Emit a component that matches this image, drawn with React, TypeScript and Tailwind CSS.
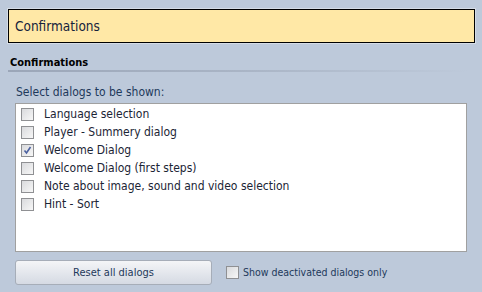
import { useState } from "react";

const font = { fontFamily: '"DejaVu Sans Condensed", "Liberation Sans", sans-serif' };

const dialogs = [
  { label: "Language selection", checked: false },
  { label: "Player - Summery dialog", checked: false },
  { label: "Welcome Dialog", checked: true },
  { label: "Welcome Dialog (first steps)", checked: false },
  { label: "Note about image, sound and video selection", checked: false },
  { label: "Hint - Sort", checked: false },
];

function Check({ checked }: { checked: boolean }) {
  return (
    <span className="relative flex h-[13px] w-[13px] shrink-0 items-center justify-center border border-[#8f9093] bg-gradient-to-br from-[#d9dadd] to-[#f7f7f7]">
      {checked && (
        <svg width="9" height="9" viewBox="0 0 9 9" className="absolute">
          <path d="M1.5 4.5 L3.5 7 L7.5 1" fill="none" stroke="#4c61a0" strokeWidth="1.6" />
        </svg>
      )}
    </span>
  );
}

export default function App() {
  const [items, setItems] = useState(dialogs);
  const [onlyDeactivated, setOnlyDeactivated] = useState(false);

  return (
    <div
      className="flex h-[292px] w-[482px] flex-col bg-[#bdc9da] px-[8px] pt-[9px] text-[11px] leading-[13px] text-[#1e395b]"
      style={font}
    >
      <div className="flex h-[34px] w-[467px] items-center border border-black bg-[#ffe8a6] pl-[6px] text-[13.5px] text-[#15233c] shadow-[0_0_0_1px_#d5dce6]">
        Confirmations
      </div>

      <div className="mt-[13px] pl-[2px] font-bold text-black">Confirmations</div>
      <div className="mt-[1px] h-[2px] w-[460px] bg-gradient-to-r from-[#9ba6b8] via-[#a9b4c5] to-[#bdc9da]" />

      <div className="mt-[14px] pl-[8px] text-[12px]">Select dialogs to be shown:</div>

      <div className="ml-[7px] mt-[4px] flex h-[149px] w-[452px] flex-col border border-[#a0a0a0] bg-white pt-[1px]">
        {items.map((item, i) => (
          <label key={item.label} className="flex h-[18px] cursor-default items-center pl-[5px]">
            <span
              onClick={() =>
                setItems(items.map((it, j) => (j === i ? { ...it, checked: !it.checked } : it)))
              }
            >
              <Check checked={item.checked} />
            </span>
            <span className="ml-[10px] text-[12px] text-[#1b2535]">{item.label}</span>
          </label>
        ))}
      </div>

      <div className="ml-[7px] mt-[8px] flex items-center">
        <button className="h-[25px] w-[197px] rounded-[3px] border border-[#a6adb8] bg-gradient-to-b from-[#f4f5f7] to-[#d5dae3] text-[11px] text-[#1e395b]">
          Reset all dialogs
        </button>
        <label className="ml-[14px] flex items-center" onClick={() => setOnlyDeactivated(!onlyDeactivated)}>
          <Check checked={onlyDeactivated} />
          <span className="ml-[4px] text-[10.5px]">Show deactivated dialogs only</span>
        </label>
      </div>
    </div>
  );
}
